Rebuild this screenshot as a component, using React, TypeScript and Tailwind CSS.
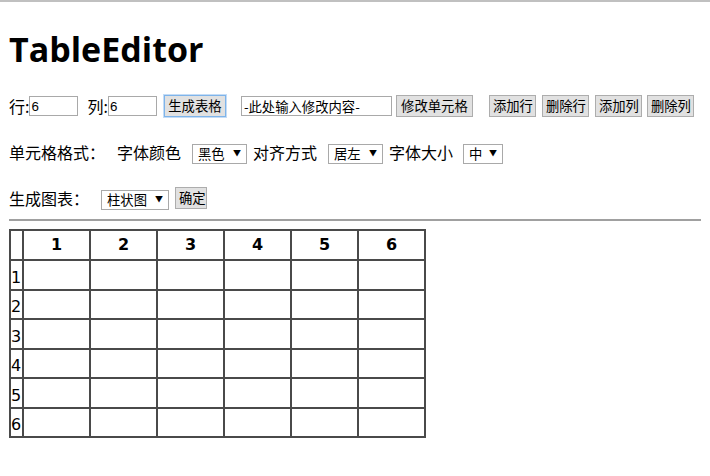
import React, { useState } from 'react';

const cjk = "font-['Noto_Sans_CJK_SC','Noto_Sans',sans-serif]";

const Btn = ({ label, focus, className = '' }: { label: string; focus?: boolean; className?: string }) => (
  <button
    type="button"
    className={`shrink-0 whitespace-nowrap h-[22px] px-[3px] text-[13.33px] leading-none text-black bg-[#e1e1e1] border ${
      focus ? 'border-[#7eb4ea] outline outline-1 outline-[#c4dcf6]' : 'border-[#adadad]'
    } ${className}`}
  >
    {label}
  </button>
);

const Pick = ({ value, width }: { value: string; width: string }) => (
  <span className={`relative inline-flex items-center h-[20px] ${width} border border-[#a9a9a9] bg-white pl-[5px] text-[13.33px] leading-none whitespace-nowrap`}>
    {value}
    <span className="absolute right-[5px] top-[4px] text-[8px] leading-none">▼</span>
  </span>
);

const App = () => {
  const [rows] = useState(6);
  const [cols] = useState(6);
  const colIdx = Array.from({ length: cols }, (_, i) => i + 1);
  const rowIdx = Array.from({ length: rows }, (_, i) => i + 1);

  return (
    <div className={`w-[710px] h-[476px] bg-white border-t-2 border-[#c0c0c0] px-[9px] text-black text-[16px] ${cjk}`}>
      <h1 className="mt-[22px] h-[50px] text-[34px] font-bold leading-[50px] font-['Open_Sans',sans-serif]">
        TableEditor
      </h1>

      {/* 行列输入与操作 */}
      <div className="mt-[21px] flex items-center h-[22px] whitespace-nowrap">
        <span className="shrink-0">行:</span>
        <input className="shrink-0 w-[49px] h-[20px] border border-[#a9a9a9] px-[1px] text-[13.33px] font-['Liberation_Sans',sans-serif]" defaultValue="6" />
        <span className="shrink-0 ml-[9px]">列:</span>
        <input className="shrink-0 w-[49px] h-[20px] border border-[#a9a9a9] px-[1px] text-[13.33px] font-['Liberation_Sans',sans-serif]" defaultValue="6" />
        <Btn label="生成表格" focus className="ml-[7px] w-[62px]" />
        <input
          className="shrink-0 ml-[15px] w-[151px] h-[20px] border border-[#a9a9a9] px-[2px] text-[13.33px]"
          defaultValue="-此处输入修改内容-"
        />
        <Btn label="修改单元格" className="ml-[4px] w-[77px]" />
        <Btn label="添加行" className="ml-[16px] w-[47px]" />
        <Btn label="删除行" className="ml-[6px] w-[47px]" />
        <Btn label="添加列" className="ml-[6px] w-[47px]" />
        <Btn label="删除列" className="ml-[5px] w-[47px]" />
      </div>

      {/* 单元格格式 */}
      <div className="mt-[24px] flex items-center h-[22px] whitespace-nowrap">
        <span>单元格格式：</span>
        <span className="ml-[12px]">字体颜色</span>
        <span className="ml-[11px]"><Pick value="黑色" width="w-[55px]" /></span>
        <span className="ml-[6px]">对齐方式</span>
        <span className="ml-[11px]"><Pick value="居左" width="w-[55px]" /></span>
        <span className="ml-[6px]">字体大小</span>
        <span className="ml-[10px]"><Pick value="中" width="w-[40px]" /></span>
      </div>

      {/* 生成图表 */}
      <div className="mt-[24px] flex items-center h-[22px] whitespace-nowrap">
        <span>生成图表：</span>
        <span className="ml-[12px]"><Pick value="柱状图" width="w-[68px]" /></span>
        <Btn label="确定" className="ml-[6px] w-[32px]" />
      </div>

      <hr className="mt-[10px] border-t-2 border-[#a0a0a0]" />

      <table className="mt-[8px] border-collapse border-2 border-[#4a4a4a] font-['DejaVu_Sans',sans-serif]">
        <thead>
          <tr className="h-[30px]">
            <th className="w-[13px] p-0 border-2 border-[#4a4a4a]"></th>
            {colIdx.map(c => (
              <th key={c} className="w-[67px] p-0 border-2 border-[#4a4a4a] text-[16px] font-bold">
                {c}
              </th>
            ))}
          </tr>
        </thead>
        <tbody>
          {rowIdx.map(r => (
            <tr key={r} className="h-[29.5px]">
              <td className="p-0 pt-[6px] border-2 border-[#4a4a4a] text-[16px] leading-none">{r}</td>
              {colIdx.map(c => (
                <td key={c} className="p-0 border-2 border-[#4a4a4a]"></td>
              ))}
            </tr>
          ))}
        </tbody>
      </table>
    </div>
  );
};

export default App;
